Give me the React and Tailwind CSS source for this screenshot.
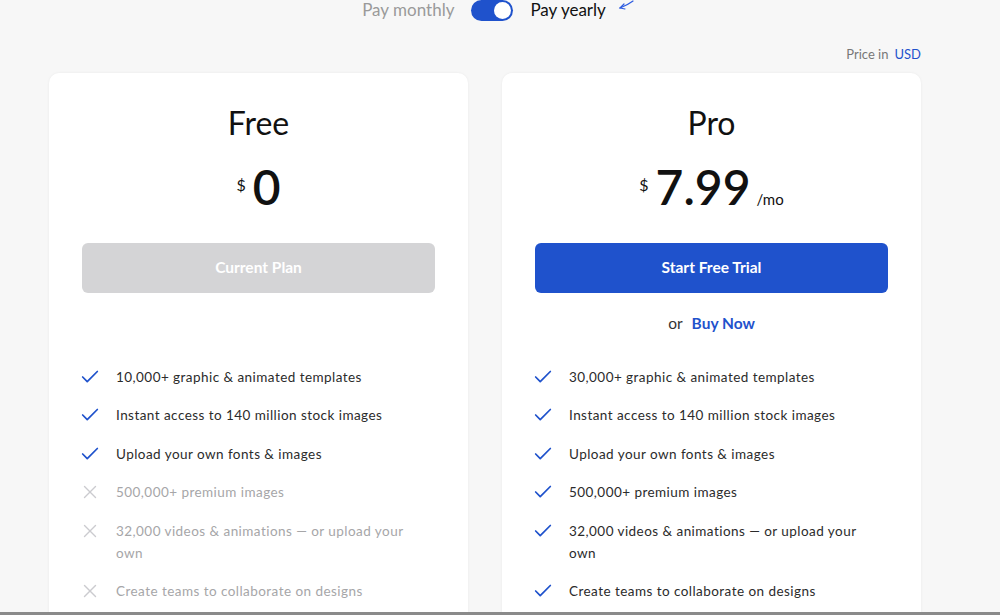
import React from "react";
import { Check, X } from "lucide-react";

const font = { fontFamily: "Lato, 'Liberation Sans', sans-serif" };

const freeFeatures = [
  { t: "10,000+ graphic & animated templates", ok: true },
  { t: "Instant access to 140 million stock images", ok: true },
  { t: "Upload your own fonts & images", ok: true },
  { t: "500,000+ premium images", ok: false },
  { t: "32,000 videos & animations — or upload your own", ok: false },
  { t: "Create teams to collaborate on designs", ok: false },
];
const proFeatures = [
  { t: "30,000+ graphic & animated templates", ok: true },
  { t: "Instant access to 140 million stock images", ok: true },
  { t: "Upload your own fonts & images", ok: true },
  { t: "500,000+ premium images", ok: true },
  { t: "32,000 videos & animations — or upload your own", ok: true },
  { t: "Create teams to collaborate on designs", ok: true },
];

function Features({ items }) {
  return (
    <ul className="flex flex-col gap-[16.5px]">
      {items.map((f, i) => (
        <li key={i} className="flex items-start">
          <span className="w-[22px] h-[22px] ml-[-3px] mr-[15px] flex items-center justify-center shrink-0">
            {f.ok ? (
              <Check size={22} strokeWidth={1.9} className="text-[#1f52cc]" />
            ) : (
              <X size={22} strokeWidth={1.5} className="text-[#cbcbcf]" />
            )}
          </span>
          <span
            className={`max-w-[298px] text-[13.5px] leading-[22px] tracking-[0.45px] ${
              f.ok ? "text-[#2b2b2b]" : "text-[#a6a6a8]"
            }`}
          >
            {f.t}
          </span>
        </li>
      ))}
    </ul>
  );
}

function Card({ title, price, mo, button, pro, features }) {
  return (
    <div className="flex-1 bg-white rounded-[10px] shadow-[0_0_3px_rgba(0,0,0,0.06)] px-[33px] pt-[30px] pb-10">
      <div className="text-center text-[32px] leading-[40px] text-[#111]">{title}</div>
      <div className="mt-[20px] h-[48px] flex items-center justify-center text-[#111]">
        <span className="text-[16px] self-start mt-[10px] mr-[7px]">$</span>
        <span className="text-[48px] leading-[48px] font-semibold">{price}</span>
        {mo && <span className="text-[15px] ml-[6px] mt-[26px]">/mo</span>}
      </div>
      <button
        className={`mt-[32px] w-full h-[50px] rounded-[6px] text-[15.5px] font-bold text-white ${
          pro ? "bg-[#1f52cc]" : "bg-[#d4d4d6]"
        }`}
      >
        {button}
      </button>
      <div className="h-[73px] pt-[20px]">
        {pro && (
          <div className="text-center text-[15.5px] leading-[20px]">
            <span className="text-[#333]">or</span>
            <span className="ml-[9px] text-[#1f52cc] font-bold">Buy Now</span>
          </div>
        )}
      </div>
      <Features items={features} />
    </div>
  );
}

export default function App() {
  return (
    <div className="w-[1000px] h-[615px] flex flex-col bg-[#f7f7f7] overflow-hidden" style={font}>
      <div className="flex-1 min-h-0 overflow-hidden">
        <div className="mt-[1px] h-[18px] flex items-center justify-center">
          <span className="text-[17px] leading-[18px] text-[#9a9a9a] ml-[-4px]">Pay monthly</span>
          <span className="ml-[17px] w-[42px] h-[21px] rounded-full bg-[#1f52cc] flex items-center justify-end pr-[2px]">
            <span className="w-[17px] h-[17px] rounded-full bg-white"></span>
          </span>
          <span className="ml-[17px] text-[17px] leading-[18px] text-[#111]">Pay yearly</span>
          <svg width="16" height="12" viewBox="0 0 16 12" className="ml-[12px] mt-[-8px]">
            <path d="M15 1 C11 4 7 6 2 8" stroke="#2d5be0" strokeWidth="1.2" fill="none" strokeLinecap="round" />
            <path d="M6 4 L2 8 L7 9" stroke="#2d5be0" strokeWidth="1.2" fill="none" strokeLinecap="round" />
          </svg>
        </div>
        <div className="mt-[26px] w-[872px] ml-[49px] flex justify-end text-[13px] text-[#777]">
          Price in <span className="ml-[6px] text-[#1f52cc]">USD</span>
        </div>
        <div className="mt-[8px] w-[872px] ml-[49px] flex gap-[34px]">
          <Card title="Free" price="0" button="Current Plan" features={freeFeatures} />
          <Card title="Pro" price="7.99" mo button="Start Free Trial" pro features={proFeatures} />
        </div>
      </div>
      <div className="h-[3px] bg-[#8a8a8a] shrink-0"></div>
    </div>
  );
}
